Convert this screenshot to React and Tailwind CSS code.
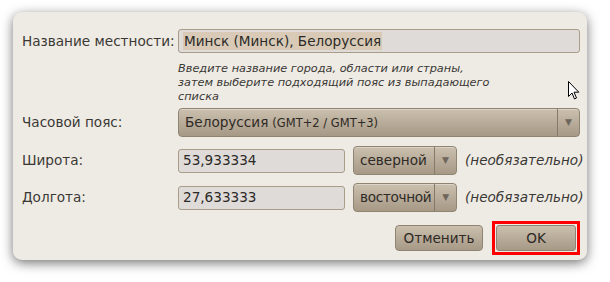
import React from "react";

const font = { fontFamily: '"DejaVu Sans", "Noto Sans", sans-serif' };

function Combo({ children, className }) {
  return (
    <div
      className={
        "flex items-stretch rounded-[4px] border border-[#8f8372] bg-gradient-to-b from-[#cbbfae] to-[#a69986] text-[#2e2a25] shadow-[inset_0_1px_0_rgba(255,255,255,0.35)] " +
        className
      }
    >
      <div className="flex flex-1 items-baseline self-center pl-[6px] whitespace-nowrap overflow-hidden">{children}</div>
      <div className="flex w-[22px] shrink-0 items-center justify-center border-l border-[#85796a]">
        <span className="text-[9px] text-[#6e665c]">▼</span>
      </div>
    </div>
  );
}

function Field({ children, className }) {
  return (
    <div
      className={
        "flex items-center rounded-[3px] border border-[#a99c88] bg-[#dfdbd8] pl-[4px] text-[#2c2a28] " + className
      }
    >
      {children}
    </div>
  );
}

export default function App() {
  return (
    <div className="h-[282px] w-[610px] bg-white pt-[12px] pl-[13px]" style={font}>
      <div className="relative h-[248px] w-[574px] rounded-[9px] bg-[#eeebe4] pt-[17px] pl-[9px] text-[13.6px] text-[#3a3835] shadow-[0_3px_12px_rgba(0,0,0,0.55)]">
        {/* Location name */}
        <div className="flex items-center">
          <div className="w-[156px]">Название местности:</div>
          <Field className="h-[24px] w-[402px]">
            <span className="bg-[#d8cab6] px-[1px] leading-[18px]">Минск (Минск), Белоруссия</span>
          </Field>
        </div>
        <div className="ml-[156px] mt-[9px] text-[11.3px] italic leading-[14px] text-[#3a3835]">
          Введите название города, области или страны,
          <br />
          затем выберите подходящий пояс из выпадающего
          <br />
          списка
        </div>

        {/* Timezone */}
        <div className="mt-[4px] flex items-center">
          <div className="w-[156px]">Часовой пояс:</div>
          <Combo className="h-[29px] w-[402px]">
            <span>Белоруссия</span>
            <span className="ml-[4px] text-[11.5px]">(GMT+2 / GMT+3)</span>
          </Combo>
        </div>

        {/* Latitude */}
        <div className="mt-[9px] flex items-center">
          <div className="w-[156px]">Широта:</div>
          <Field className="h-[24px] w-[167px]">53,933334</Field>
          <Combo className="ml-[8px] h-[29px] w-[104px]">северной</Combo>
          <div className="ml-[8px] italic">(необязательно)</div>
        </div>

        {/* Longitude */}
        <div className="mt-[8px] flex items-center">
          <div className="w-[156px]">Долгота:</div>
          <Field className="h-[24px] w-[167px]">27,633333</Field>
          <Combo className="ml-[8px] h-[29px] w-[104px] tracking-[-0.3px]">восточной</Combo>
          <div className="ml-[8px] italic">(необязательно)</div>
        </div>

        {/* Buttons */}
        <div className="mt-[9px] flex items-center justify-end pr-[7px]">
          <button className="h-[26px] w-[88px] rounded-[4px] border border-[#8f8372] bg-gradient-to-b from-[#cbbfae] to-[#a69986] text-[#2e2a25]">
            Отменить
          </button>
          <div className="ml-[9px] border-[3px] border-[#ff0000] p-[1px]">
            <button className="block h-[26px] w-[80px] rounded-[3px] border border-[#8f8372] bg-gradient-to-b from-[#cbbfae] to-[#a69986] text-[#2e2a25]">
              OK
            </button>
          </div>
        </div>

        {/* Mouse cursor */}
        <svg className="absolute left-[555px] top-[69px]" width="12" height="19" viewBox="0 0 12 19">
          <path d="M0.5 0.5 L0.5 15.5 L4 12 L6.5 18 L8.5 17 L6 11.2 L10.8 11.2 Z" fill="#ffffff" stroke="#000000" strokeWidth="1" strokeLinejoin="round" />
        </svg>
      </div>
    </div>
  );
}
